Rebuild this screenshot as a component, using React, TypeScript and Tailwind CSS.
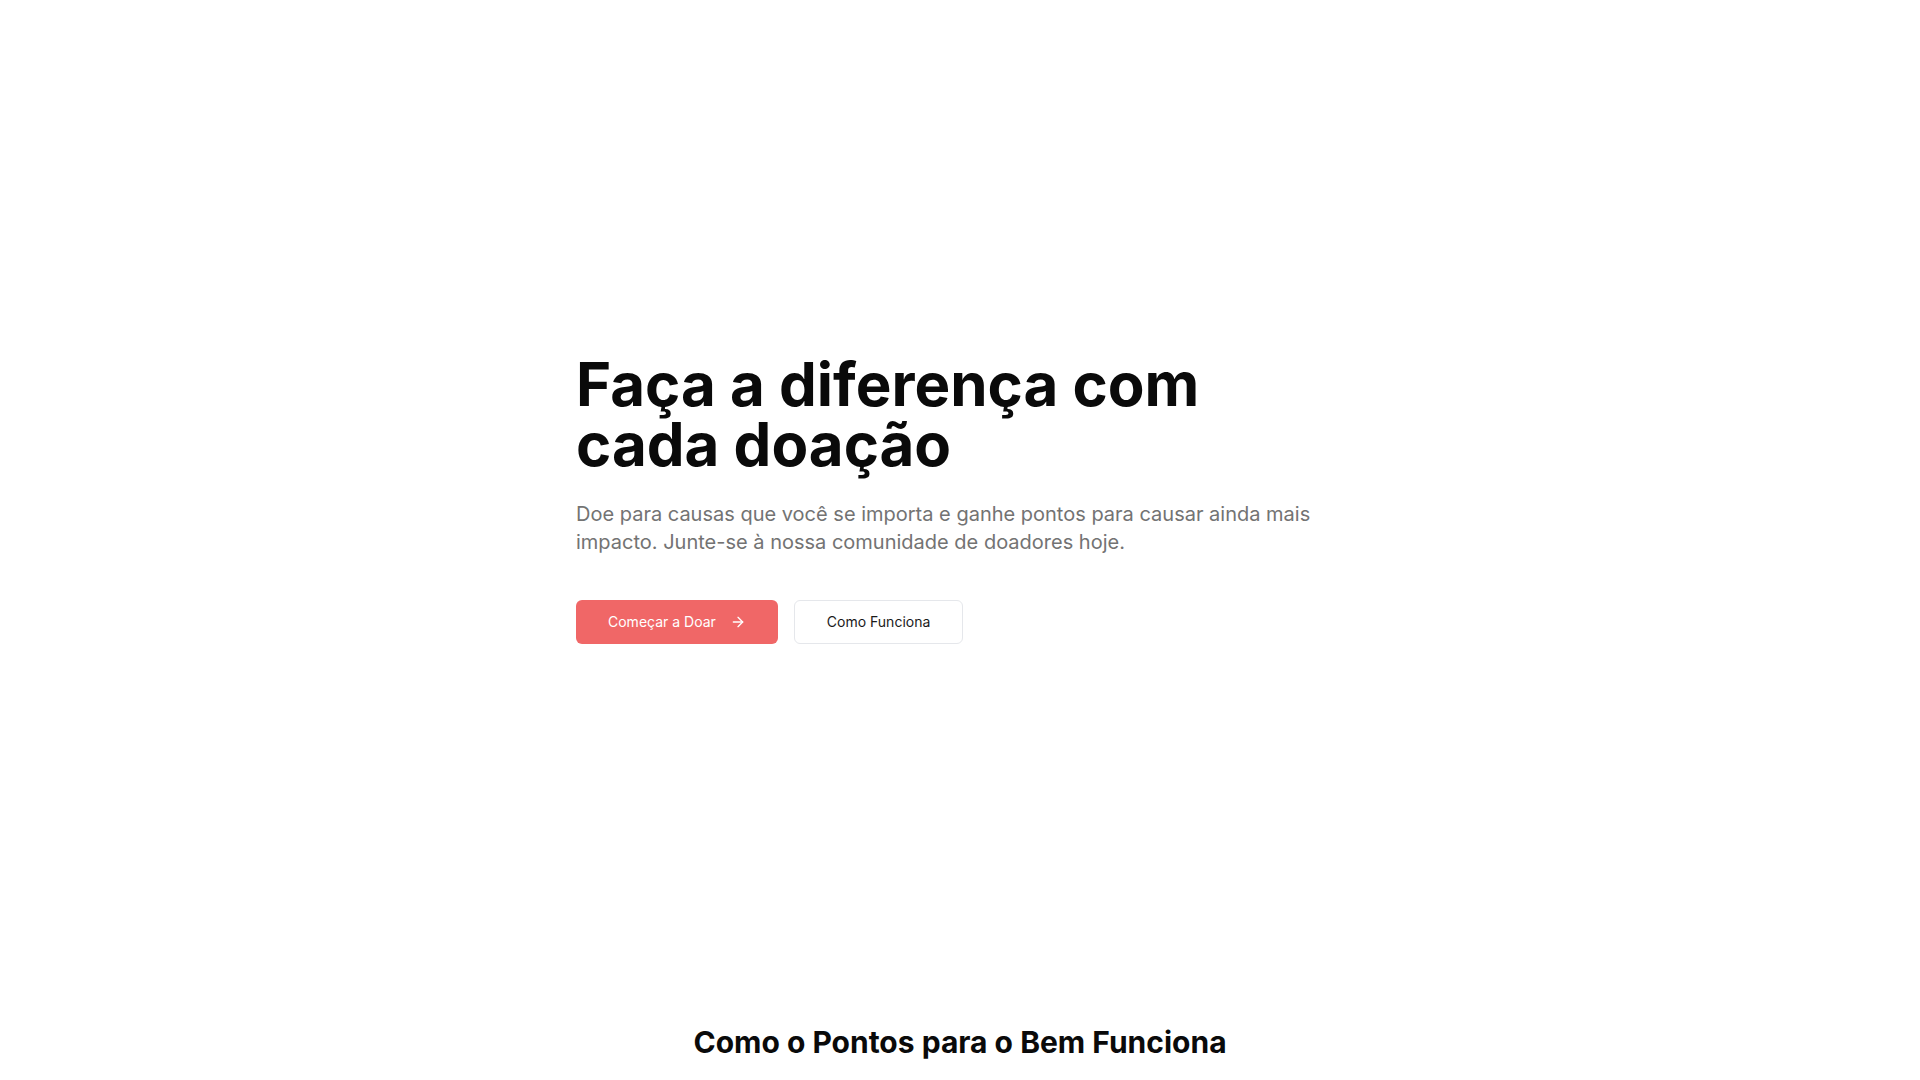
import React from "react";

function ArrowRight() {
  return (
    <svg
      xmlns="http://www.w3.org/2000/svg"
      width="16"
      height="16"
      viewBox="0 0 24 24"
      fill="none"
      stroke="currentColor"
      strokeWidth="2"
      strokeLinecap="round"
      strokeLinejoin="round"
      className="ml-[14px] h-4 w-4"
    >
      <path d="M5 12h14" />
      <path d="m12 5 7 7-7 7" />
    </svg>
  );
}

export default function App() {
  return (
    <div
      className="min-h-screen bg-white text-[#0a0a0a]"
      style={{ fontFamily: "Inter, 'Noto Sans', sans-serif" }}
    >
      <section className="flex min-h-[998px] items-center">
        <div className="mx-auto w-full max-w-3xl">
          <h1 className="text-6xl font-bold leading-none text-[#0a0a0a]">
            Faça a diferença com
            <br />
            cada doação
          </h1>
          <p className="mt-[26px] text-xl text-[#737373]">
            Doe para causas que você se importa e ganhe pontos para causar ainda mais impacto. Junte-se à nossa comunidade de doadores hoje.
          </p>
          <div className="mt-11 flex gap-4">
            <button className="flex h-11 items-center rounded-md bg-[#f06767] px-8 text-sm font-normal text-white">
              Começar a Doar
              <ArrowRight />
            </button>
            <button className="flex h-11 items-center rounded-md border border-[#e5e7eb] bg-white px-8 text-sm font-normal text-[#1a1a1a]">
              Como Funciona
            </button>
          </div>
        </div>
      </section>
      <section className="pt-[26px] pb-24">
        <h2 className="text-center text-3xl font-bold text-[#0a0a0a]">
          Como o Pontos para o Bem Funciona
        </h2>
      </section>
    </div>
  );
}
